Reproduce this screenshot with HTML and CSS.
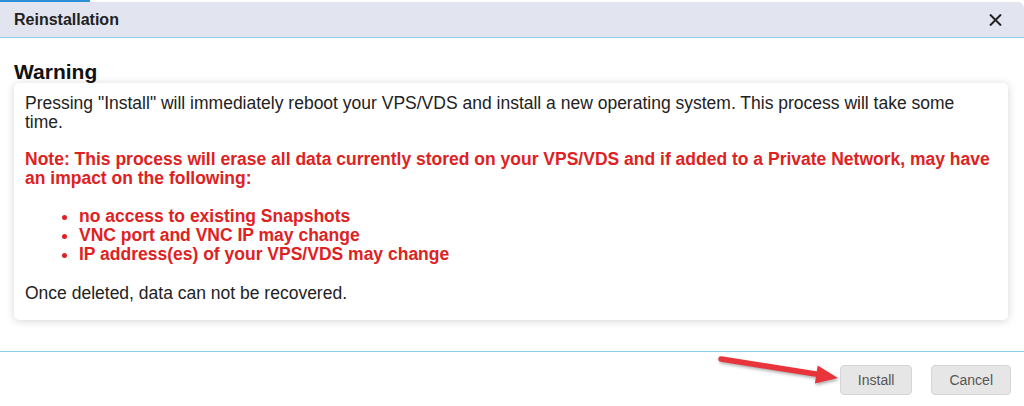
FILE: index.html
```html
<!DOCTYPE html>
<html lang="en">
<head>
<meta charset="utf-8">
<title>Reinstallation</title>
<link rel="stylesheet" href="styles.css">
</head>
<body>
<div class="page">
  <div class="tab-strip"></div>
  <div class="dialog-header">
    <span class="dialog-title">Reinstallation</span>
    <button class="close-btn" aria-label="Close">
      <svg width="13" height="12" viewBox="0 0 13 12"><path d="M1 0.5 L12 11.5 M12 0.5 L1 11.5" stroke="#222" stroke-width="2" fill="none"/></svg>
    </button>
  </div>
  <div class="content">
    <h2 class="warning-title">Warning</h2>
    <div class="warning-box">
      <p>Pressing "Install" will immediately reboot your VPS/VDS and install a new operating system. This process will take some time.</p>
      <p class="note">Note: This process will erase all data currently stored on your VPS/VDS and if added to a Private Network, may have an impact on the following:</p>
      <ul class="note-list">
        <li>no access to existing Snapshots</li>
        <li>VNC port and VNC IP may change</li>
        <li>IP address(es) of your VPS/VDS may change</li>
      </ul>
      <p class="final">Once deleted, data can not be recovered.</p>
    </div>
  </div>
  <div class="separator"></div>
  <div class="footer">
    <button class="btn">Install</button>
    <button class="btn">Cancel</button>
  </div>
  <svg class="arrow" width="130" height="40" viewBox="0 0 130 40">
    <line x1="6" y1="7" x2="104" y2="22.5" stroke="#e8353b" stroke-width="5.5" stroke-linecap="round"/>
    <polygon points="123,26 102.7,13.4 99.9,31.6" fill="#e8353b"/>
  </svg>
</div>
</body>
</html>
```
FILE: styles.css
```css
html, body {
  margin: 0;
  padding: 0;
  background: #fff;
}
body {
  font-family: "Liberation Sans", Arial, sans-serif;
  color: #222;
}
.page {
  position: relative;
  width: 1024px;
  height: 406px;
  overflow: hidden;
}
.tab-strip {
  width: 90px;
  height: 2px;
  background: #2b8fd5;
}
.dialog-header {
  height: 35px;
  background: #e2e5ef;
  border-bottom: 1px solid #86cfee;
  border-top-right-radius: 6px;
  display: flex;
  align-items: center;
  justify-content: space-between;
  padding: 0 22px 0 14px;
}
.dialog-title {
  font-size: 16px;
  font-weight: bold;
  color: #222;
}
.close-btn {
  border: 0;
  background: transparent;
  padding: 0;
  margin: 1px 0 0;
  display: flex;
  cursor: pointer;
}
.content {
  padding: 0 16px 0 14px;
}
.warning-title {
  font-size: 21px;
  line-height: 23px;
  font-weight: bold;
  margin: 22px 0 0;
  color: #111;
}
.warning-box {
  background: #fff;
  border-radius: 5px;
  box-shadow: 0 1px 9px rgba(0, 0, 0, 0.17);
  padding: 11px 11px 17px;
  font-size: 17.5px;
  line-height: 19px;
}
.warning-box p {
  margin: 0;
}
.warning-box .note {
  margin-top: 18px;
  color: #de2222;
  font-weight: bold;
}
.note-list {
  margin: 19px 0 0;
  padding-left: 54px;
  color: #de2222;
  font-weight: bold;
}
.warning-box .final {
  margin-top: 20px;
}
.separator {
  margin-top: 31px;
  height: 1px;
  background: #86cfee;
}
.footer {
  display: flex;
  justify-content: flex-end;
  gap: 19px;
  padding: 13px 13px 0 0;
}
.btn {
  height: 30px;
  padding: 0 17px;
  border: 1px solid #d5d5d5;
  border-radius: 4px;
  background: #e6e6e6;
  color: #555;
  font-family: "Liberation Sans", Arial, sans-serif;
  font-size: 14px;
}
.arrow {
  position: absolute;
  left: 715px;
  top: 352px;
  filter: drop-shadow(1px 2px 1.5px rgba(0, 0, 0, 0.3));
}
```
